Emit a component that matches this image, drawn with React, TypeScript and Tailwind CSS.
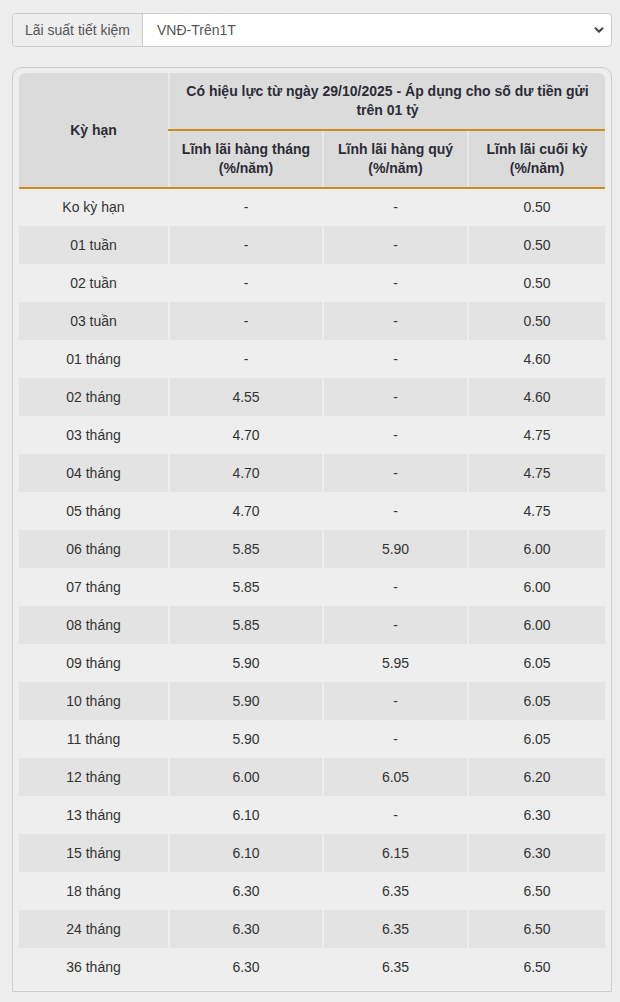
import React from 'react';

const ROWS: [string, string, string, string][] = [
  ['Ko kỳ hạn', '-', '-', '0.50'],
  ['01 tuần', '-', '-', '0.50'],
  ['02 tuần', '-', '-', '0.50'],
  ['03 tuần', '-', '-', '0.50'],
  ['01 tháng', '-', '-', '4.60'],
  ['02 tháng', '4.55', '-', '4.60'],
  ['03 tháng', '4.70', '-', '4.75'],
  ['04 tháng', '4.70', '-', '4.75'],
  ['05 tháng', '4.70', '-', '4.75'],
  ['06 tháng', '5.85', '5.90', '6.00'],
  ['07 tháng', '5.85', '-', '6.00'],
  ['08 tháng', '5.85', '-', '6.00'],
  ['09 tháng', '5.90', '5.95', '6.05'],
  ['10 tháng', '5.90', '-', '6.05'],
  ['11 tháng', '5.90', '-', '6.05'],
  ['12 tháng', '6.00', '6.05', '6.20'],
  ['13 tháng', '6.10', '-', '6.30'],
  ['15 tháng', '6.10', '6.15', '6.30'],
  ['18 tháng', '6.30', '6.35', '6.50'],
  ['24 tháng', '6.30', '6.35', '6.50'],
  ['36 tháng', '6.30', '6.35', '6.50'],
];

export default function App() {
  return (
    <div className="min-h-[1002px] bg-[#eeeeee] pt-[13px] font-['Liberation_Sans',Arial,sans-serif] text-[14px] text-[#333]">
      {/* Bộ chọn loại lãi suất */}
      <div className="ml-3 flex h-[34px] w-[600px] rounded-[4px] border border-[#cccccc] bg-white">
        <div className="flex w-[130px] items-center justify-center rounded-l-[4px] border-r border-[#cccccc] bg-[#eeeeee] text-[#555]">
          Lãi suất tiết kiệm
        </div>
        <div className="flex flex-1 items-center justify-between pl-[14px] pr-[6px] text-[#555]">
          <span>VNĐ-Trên1T</span>
          <svg width="12" height="12" viewBox="0 0 12 12" fill="none">
            <path d="M2.5 4.2 6 7.7 9.5 4.2" stroke="#444" strokeWidth="2" strokeLinecap="round" strokeLinejoin="round" />
          </svg>
        </div>
      </div>

      {/* Bảng lãi suất */}
      <div className="ml-3 mt-5 w-[600px] rounded-t-[10px] border border-[#cccccc] pb-[5px] pl-[6px] pr-[5px] pt-[5px]">
        <table className="w-[586px] table-fixed border-collapse">
          <colgroup>
            <col className="w-[150px]" />
            <col className="w-[154px]" />
            <col className="w-[145px]" />
            <col className="w-[137px]" />
          </colgroup>
          <thead className="font-bold text-[#2c2c36]">
            <tr>
              <th rowSpan={2} className="rounded-tl-[6px] border-b-2 border-b-[#d08b1c] bg-[#dcdbdb] font-bold">
                Kỳ hạn
              </th>
              <th colSpan={3} className="h-[57px] rounded-tr-[6px] border-b-2 border-l-2 border-b-[#d08b1c] border-l-[#e8e8e8] bg-[#dcdbdb] px-3 leading-[19px]">
                Có hiệu lực từ ngày 29/10/2025 - Áp dụng cho số dư tiền gửi trên 01 tỷ
              </th>
            </tr>
            <tr>
              <th className="h-[58px] border-b-2 border-l-2 border-b-[#d08b1c] border-l-[#e8e8e8] bg-[#dcdbdb] leading-[19px]">
                Lĩnh lãi hàng tháng<br />(%/năm)
              </th>
              <th className="border-b-2 border-l-2 border-b-[#d08b1c] border-l-[#e8e8e8] bg-[#dcdbdb] leading-[19px]">
                Lĩnh lãi hàng quý<br />(%/năm)
              </th>
              <th className="border-b-2 border-l-2 border-b-[#d08b1c] border-l-[#e8e8e8] bg-[#dcdbdb] leading-[19px]">
                Lĩnh lãi cuối kỳ<br />(%/năm)
              </th>
            </tr>
          </thead>
          <tbody>
            {ROWS.map((r, i) => (
              <tr key={r[0]} className={i % 2 === 1 ? 'bg-[#e3e3e3]' : 'bg-[#eeeeee]'}>
                {r.map((c, j) => (
                  <td
                    key={j}
                    className={`h-[38px] text-center ${j > 0 ? 'border-l-2 border-l-[#eeeeee]' : ''}`}
                  >
                    {c}
                  </td>
                ))}
              </tr>
            ))}
          </tbody>
        </table>
      </div>
    </div>
  );
}
